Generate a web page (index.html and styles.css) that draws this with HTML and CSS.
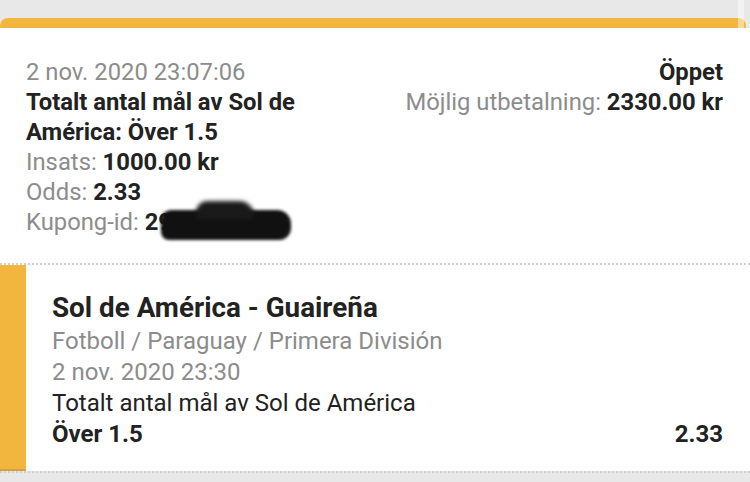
FILE: index.html
```html
<!DOCTYPE html>
<html lang="sv">
<head>
<meta charset="utf-8">
<link rel="stylesheet" href="styles.css">
</head>
<body>
<div class="scrollbar"></div>
<div class="ticket">
  <div class="topbar"></div>
  <div class="summary">
    <div class="left">
      <div class="muted">2 nov. 2020 23:07:06</div>
      <div class="strong">Totalt antal mål av Sol de América: Över 1.5</div>
      <div class="muted">Insats: <b class="val">1000.00 kr</b></div>
      <div class="muted">Odds: <b class="val">2.33</b></div>
      <div class="muted kupong">Kupong-id: <b class="val">29</b><span class="redact"></span><span class="redact2"></span></div>
    </div>
    <div class="right">
      <div class="strong">Öppet</div>
      <div class="muted">Möjlig utbetalning: <b class="val">2330.00 kr</b></div>
    </div>
  </div>
  <div class="event">
    <div class="accent"></div>
    <div class="event-body">
      <div class="title">Sol de América - Guaireña</div>
      <div class="muted">Fotboll / Paraguay / Primera División</div>
      <div class="muted">2 nov. 2020 23:30</div>
      <div class="market">Totalt antal mål av Sol de América</div>
      <div class="pick-row">
        <span class="pick">Över 1.5</span>
        <span class="pick">2.33</span>
      </div>
    </div>
  </div>
</div>
</body>
</html>
```
FILE: styles.css
```css
html, body {
  margin: 0;
  padding: 0;
}
body {
  background: #e8e8e8;
  font-family: Roboto, "Noto Sans", sans-serif;
  width: 750px;
  height: 482px;
  overflow: hidden;
  padding-top: 18px;
  box-sizing: border-box;
  position: relative;
}
.scrollbar {
  position: absolute;
  top: 0;
  left: 738px;
  width: 6px;
  height: 28px;
  background: rgba(255, 255, 255, 0.45);
  z-index: 2;
}
.topbar {
  height: 10px;
  background: #f2b53e;
  border-radius: 8px 8px 0 0;
  margin-right: 4px;
}
.summary {
  background: #fff;
  display: flex;
  justify-content: space-between;
  padding: 29px 27px 26px 26px;
  font-size: 23.8px;
  line-height: 30px;
  border-bottom: 2px dotted #cfcfcf;
}
.left {
  max-width: 320px;
}
.right {
  text-align: right;
}
.muted {
  color: #8c8c8c;
}
.strong {
  color: #222;
  font-weight: 700;
}
.val {
  color: #222;
  font-weight: 700;
}
.kupong {
  position: relative;
}
.redact {
  position: absolute;
  left: 135px;
  top: 3px;
  width: 130px;
  height: 30px;
  background: #111;
  border-radius: 10px 14px 12px 8px;
  filter: blur(1.5px);
}
.redact2 {
  position: absolute;
  left: 170px;
  top: -6px;
  width: 58px;
  height: 18px;
  background: #1a1a1a;
  border-radius: 14px 18px 4px 4px;
  filter: blur(2px);
}
.event {
  display: flex;
  border-bottom: 2px dotted #cfcfcf;
}
.accent {
  width: 26px;
  background: #f2b53e;
  box-shadow: inset 0 -2px 0 #d99e35;
}
.event-body {
  flex: 1;
  background: #fff;
  padding: 25px 27px 21px 26px;
  font-size: 24px;
  line-height: 31px;
}
.title {
  font-size: 27.8px;
  font-weight: 700;
  color: #222;
  line-height: 36px;
}
.market {
  color: #222;
}
.pick-row {
  display: flex;
  justify-content: space-between;
}
.pick {
  color: #222;
  font-weight: 700;
}
```
